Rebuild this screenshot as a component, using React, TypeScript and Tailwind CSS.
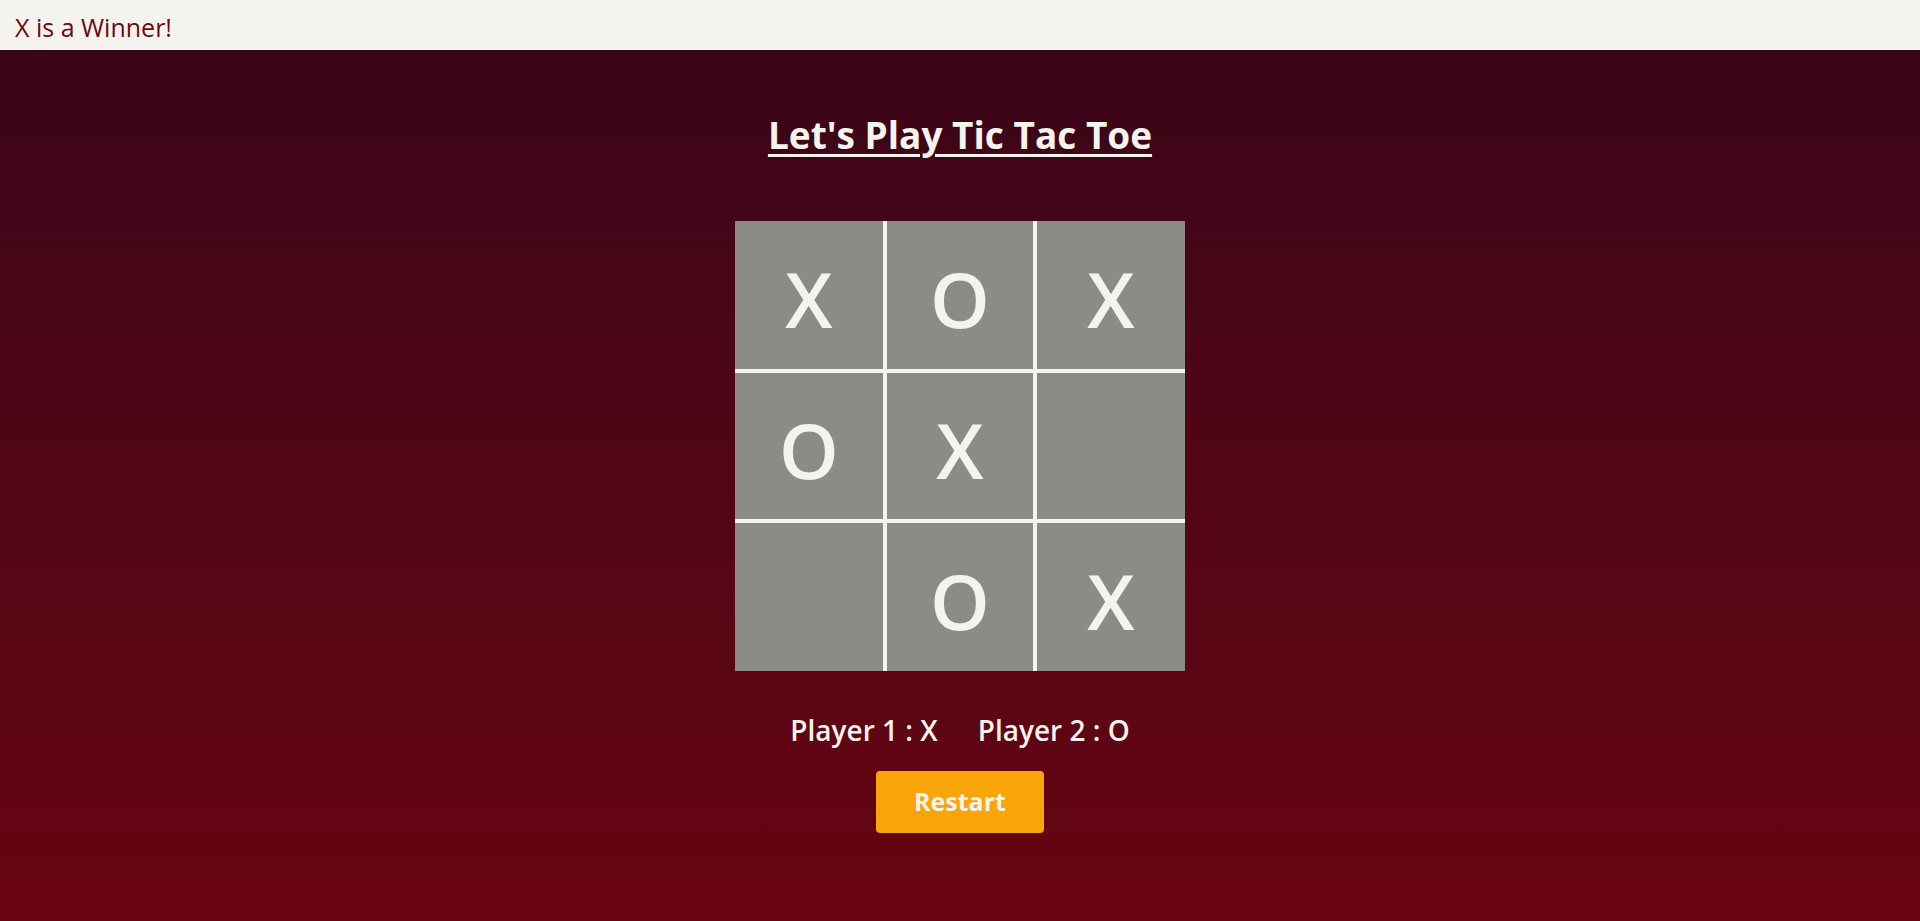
import React from "react";

const board: string[] = ["X", "O", "X", "O", "X", "", "", "O", "X"];

export default function App() {
  return (
    <div
      className="min-h-screen w-full"
      style={{ fontFamily: "'Open Sans', 'Noto Sans', sans-serif" }}
    >
      {/* status bar */}
      <div className="h-[50px] bg-[#f4f3ee] px-[15px] pt-[2px] text-[25px] leading-[50px] text-[#6b0a14]">
        X is a Winner!
      </div>

      <div className="flex min-h-[871px] flex-col items-center bg-gradient-to-b from-[#3a0518] to-[#690410]">
        <h1 className="mt-[62px] text-[37px] font-bold leading-[45px] text-[#f4f3ee] underline decoration-[3px] underline-offset-[5px]">
          Let's Play Tic Tac Toe
        </h1>

        <div className="mt-[64px] grid grid-cols-[148px_146px_148px] grid-rows-[148px_146px_148px] gap-[4px] bg-[#f4f3ee]">
          {board.map((v, i) => (
            <div
              key={i}
              className="flex items-center justify-center bg-[#8c8c87] pt-[8px] text-[76px] font-semibold text-[#f4f3ee]"
            >
              {v}
            </div>
          ))}
        </div>

        <div className="mt-[41px] flex gap-[40px] text-[28px] font-semibold leading-[36px] text-[#f4f3ee]">
          <span>Player 1 : X</span>
          <span>Player 2 : O</span>
        </div>

        <button className="mt-[23px] h-[62px] w-[168px] rounded-[4px] bg-[#f9a50a] text-[25px] font-bold text-[#f4f3ee]">
          Restart
        </button>
      </div>
    </div>
  );
}
